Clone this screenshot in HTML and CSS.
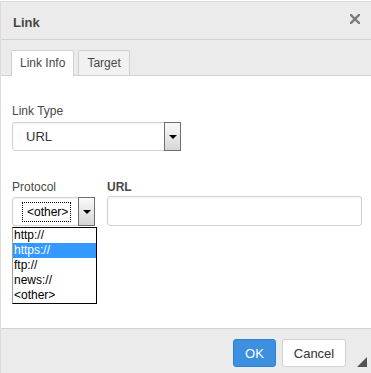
FILE: index.html
```html
<!DOCTYPE html>
<html lang="en">
<head>
  <meta charset="UTF-8" />
  <title>Link</title>
  <link rel="stylesheet" href="styles.css">
</head>
<body>
  <div class="dialog" role="dialog" aria-label="Link">
    <div class="dialog-title">
      <span>Link</span>
      <svg class="close" width="10" height="10" viewBox="0 0 10 10" aria-label="Close">
        <path d="M1 1 L9 9 M9 1 L1 9" stroke="#7b7b7b" stroke-width="2.4" stroke-linecap="square" fill="none"/>
      </svg>
    </div>

    <div class="tabs">
      <div class="tab active">Link Info</div>
      <div class="tab">Target</div>
    </div>

    <div class="dialog-body">
      <div class="field">
        <label class="label">Link Type</label>
        <div class="select select-type">
          <span class="select-value">URL</span>
          <span class="select-btn"><i class="arrow"></i></span>
        </div>
      </div>

      <div class="row">
        <div class="field col-protocol">
          <label class="label">Protocol</label>
          <div class="select select-protocol">
            <span class="select-value"><span class="focus-ring">&lt;other&gt;</span></span>
            <span class="select-btn"><i class="arrow"></i></span>
            <ul class="options">
              <li>http://</li>
              <li class="selected">https://</li>
              <li>ftp://</li>
              <li>news://</li>
              <li>&lt;other&gt;</li>
            </ul>
          </div>
        </div>
        <div class="field col-url">
          <label class="label bold">URL</label>
          <input class="text-input" type="text" />
        </div>
      </div>
    </div>

    <div class="dialog-footer">
      <button class="btn btn-ok">OK</button>
      <button class="btn btn-cancel">Cancel</button>
      <span class="resizer"></span>
    </div>
  </div>
</body>
</html>
```

FILE: styles.css
```css
* { box-sizing: border-box; }
body { margin: 0; font-family: "Liberation Sans", Arial, sans-serif; color: #484848; background: #fff; overflow: hidden; }

.dialog { margin-top: 1px; height: 372px; border-top: 1px solid #dcdcdc; border-left: 1px solid #dcdcdc; display: flex; flex-direction: column; position: relative; }

.dialog-title { height: 38px; flex: none; background: #ebebeb; border-bottom: 1px solid #d1d1d1; display: flex; align-items: flex-start; justify-content: space-between; padding: 13px 11px 0 12px; font-size: 13px; font-weight: bold; line-height: 16px; color: #484848; }
.close { margin-top: -1px; }

.tabs { height: 36px; flex: none; background: #ebebeb; border-bottom: 1px solid #d1d1d1; display: flex; align-items: flex-start; gap: 4px; padding: 10px 0 0 10px; }
.tab { height: 25px; padding: 1px 8px 0; line-height: 23px; font-size: 12px; color: #484848; background: #f1f1f1; border: 1px solid #d1d1d1; border-bottom: none; border-radius: 2px 2px 0 0; }
.tab.active { height: 26px; background: #fff; margin-bottom: -1px; }

.dialog-body { flex: 1; padding: 27px 11px 0 11px; background: #fff; }
.field { display: flex; flex-direction: column; }
.label { font-size: 12px; line-height: 16px; color: #484848; }
.label.bold { font-weight: bold; }

.select { position: relative; display: flex; align-items: stretch; border: 1px solid #d1d1d1; border-radius: 3px; background: #fff; box-shadow: inset 0 1px 2px rgba(0,0,0,0.05); }
.select-type { width: 169px; height: 29px; margin-top: 3px; }
.select-type .select-value { flex: 1; padding-left: 13px; font-size: 13px; line-height: 27px; color: #333; }
.select-btn { width: 17px; flex: none; display: flex; align-items: center; justify-content: center; border: 1px solid #6e6e6e; background: linear-gradient(#fafafa, #d6d6d6); margin: -1px -1px -1px 0; }
.arrow { width: 0; height: 0; border-left: 4px solid transparent; border-right: 4px solid transparent; border-top: 4px solid #000; }

.row { display: flex; gap: 12px; margin-top: 28px; }
.col-protocol { width: 83px; flex: none; }
.col-url { width: 255px; flex: none; }

.select-protocol { height: 29px; margin-top: 2px; }
.select-protocol .select-value { flex: 1; display: flex; align-items: center; padding-left: 9px; }
.focus-ring { font-size: 12px; line-height: 18px; padding: 0 2px 0 4px; border: 1px dotted #000; color: #000; }

.options { position: absolute; top: 29px; left: -1px; width: 85px; margin: 0; padding: 0; list-style: none; background: #fff; border: 1px solid #000; border-left-color: #a0a0a0; z-index: 2; }
.options li { height: 15px; line-height: 15px; font-size: 12px; padding-left: 1px; color: #000; }
.options li.selected { background: #3399ff; color: #fff; }

.text-input { width: 255px; height: 30px; margin: 1px 0 0; border: 1px solid #d1d1d1; border-radius: 3px; box-shadow: inset 0 1px 2px rgba(0,0,0,0.05); font: 13px "Liberation Sans", Arial, sans-serif; }

.dialog-footer { height: 45px; flex: none; background: #ebebeb; border-top: 1px solid #d1d1d1; display: flex; justify-content: flex-end; align-items: flex-start; gap: 6px; padding: 10px 25px 0 0; }
.btn { height: 28px; font: 13px "Liberation Sans", Arial, sans-serif; border-radius: 3px; padding: 0; cursor: pointer; }
.btn-ok { width: 43px; background: #3d8fe0; border: 1px solid #2f80d1; color: #fff; }
.btn-cancel { width: 64px; background: #fff; border: 1px solid #d1d1d1; color: #333; }
.resizer { position: absolute; right: 4px; bottom: 6px; width: 0; height: 0; border-left: 10px solid transparent; border-bottom: 10px solid #555; }
```
